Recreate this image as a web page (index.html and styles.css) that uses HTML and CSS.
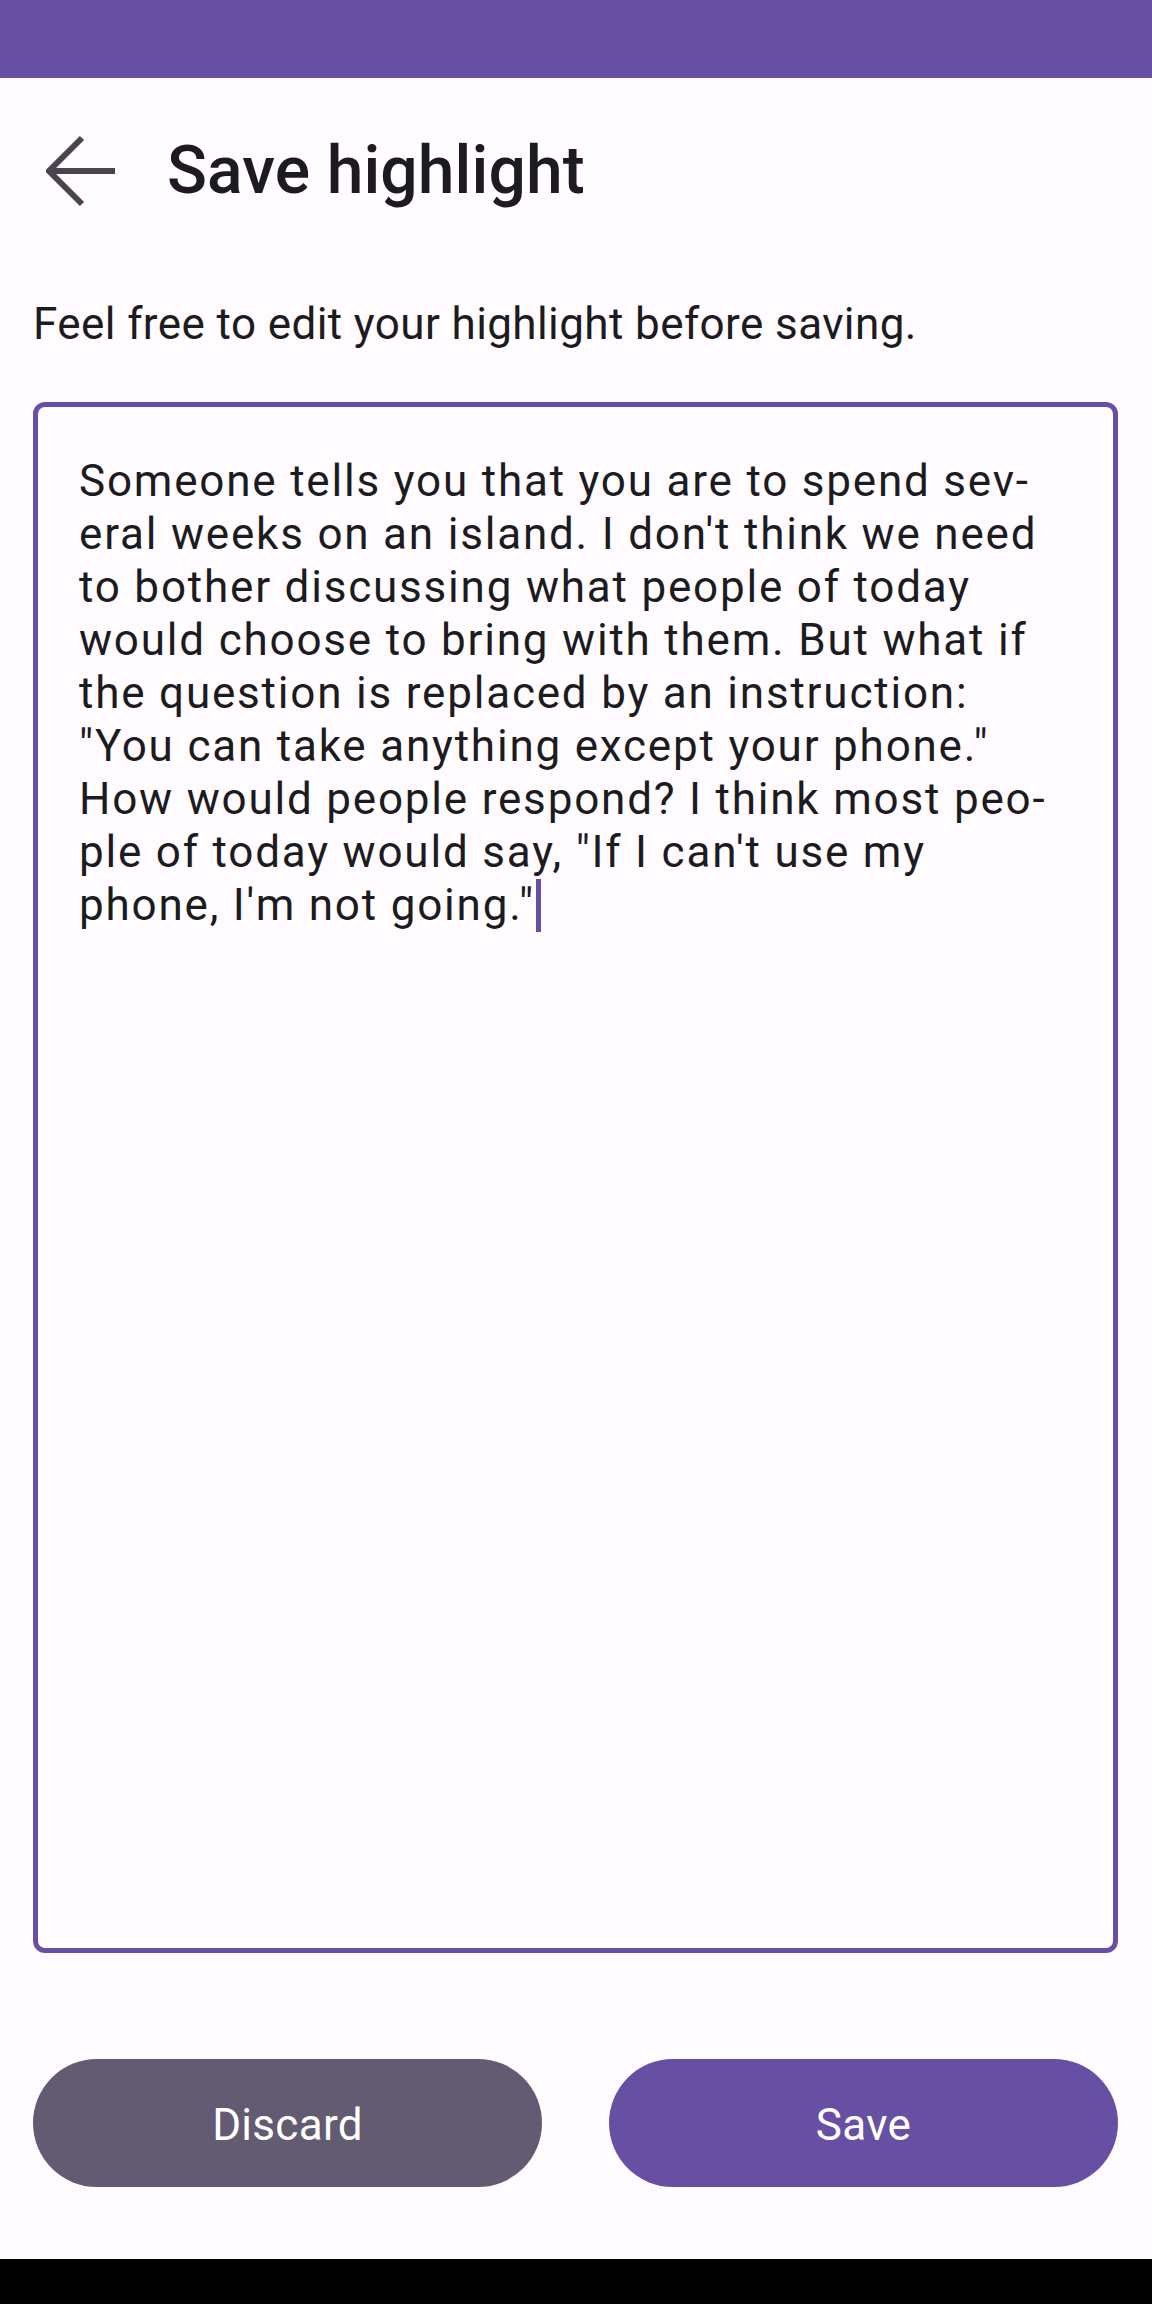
FILE: index.html
```html
<!DOCTYPE html>
<html lang="en">
<head>
<meta charset="utf-8">
<title>Save highlight</title>
<link rel="stylesheet" href="styles.css">
</head>
<body>
<div class="screen">
  <div class="status-bar"></div>
  <header class="app-bar">
    <button class="nav-btn" aria-label="Back">
      <svg class="nav-icon" width="72" height="72" viewBox="0 0 72 72">
        <path d="M3 36 H69 M36 3 L3 36 L36 69" fill="none" stroke="#49454F" stroke-width="6" stroke-linecap="butt" stroke-linejoin="miter"/>
      </svg>
    </button>
    <h1 class="title">Save highlight</h1>
  </header>
  <main class="content">
    <p class="hint">Feel free to edit your highlight before saving.</p>
    <div class="editor">
      <span class="line">Someone tells you that you are to spend sev-</span>
      <span class="line">eral weeks on an island. I don't think we need</span>
      <span class="line">to bother discussing what people of today</span>
      <span class="line">would choose to bring with them. But what if</span>
      <span class="line">the question is replaced by an instruction:</span>
      <span class="line">"You can take anything except your phone."</span>
      <span class="line">How would people respond? I think most peo-</span>
      <span class="line">ple of today would say, "If I can't use my</span>
      <span class="line">phone, I'm not going."<span class="caret"></span></span>
    </div>
    <div class="actions">
      <button class="btn btn-discard">Discard</button>
      <button class="btn btn-save">Save</button>
    </div>
  </main>
  <div class="nav-bar"></div>
</div>
</body>
</html>
```
FILE: styles.css
```css
* { box-sizing: border-box; }
html, body {
  margin: 0;
  padding: 0;
  background: #FFFBFE;
}
body {
  font-family: Roboto, "Noto Sans", "Liberation Sans", sans-serif;
  color: #1C1B1F;
}
.screen {
  width: 1152px;
  height: 2304px;
  display: flex;
  flex-direction: column;
  background: #FFFBFE;
}
.status-bar {
  height: 78px;
  background: #6750A4;
  flex: none;
}
.app-bar {
  height: 180px;
  display: flex;
  align-items: center;
  flex: none;
  padding-top: 5px;
}
.nav-btn {
  border: 0;
  background: transparent;
  padding: 0;
  margin: 0 0 0 46px;
  width: 72px;
  height: 72px;
  display: flex;
}
.nav-icon { display: block; }
.title {
  margin: 0 0 0 49px;
  font-size: 66px;
  font-weight: 500;
  line-height: 88px;
  color: #1C1B1F;
  letter-spacing: 0.1px;
}
.content {
  flex: 1;
  display: flex;
  flex-direction: column;
  padding: 0 34px 0 33px;
}
.hint {
  margin: 33px 0 0 0;
  font-size: 44px;
  line-height: 66px;
  letter-spacing: 0.4px;
  color: #1C1B1F;
}
.editor {
  margin-top: 45px;
  height: 1551px;
  border: 5px solid #6750A4;
  border-radius: 12px;
  padding: 48px 10px 0 41px;
  font-size: 44px;
  line-height: 53px;
  letter-spacing: 1.8px;
  color: #1C1B1F;
}
.line {
  display: block;
  white-space: nowrap;
}
.caret {
  display: inline-block;
  width: 5px;
  height: 53px;
  background: #6750A4;
  vertical-align: top;
  margin-left: 1px;
}
.actions {
  margin-top: 106px;
  display: flex;
  gap: 67px;
}
.btn {
  flex: 1;
  height: 128px;
  border: 0;
  border-radius: 64px;
  padding: 4px 0 0 0;
  font-family: Roboto, "Noto Sans", "Liberation Sans", sans-serif;
  font-size: 44px;
  font-weight: 400;
  color: #FFFFFF;
  letter-spacing: 0.3px;
}
.btn-discard { background: #625B71; }
.btn-save { background: #6750A4; }
.nav-bar {
  height: 45px;
  background: #000000;
  flex: none;
}
```
